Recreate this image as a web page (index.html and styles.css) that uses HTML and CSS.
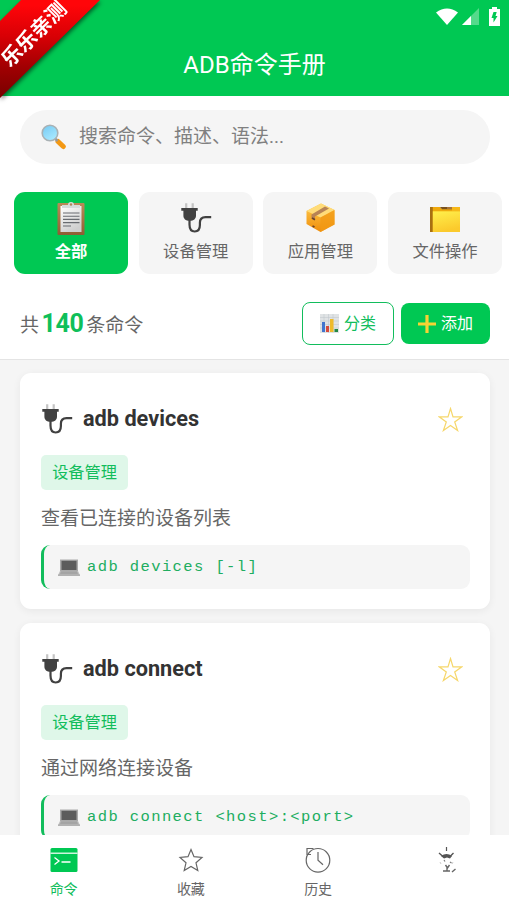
FILE: index.html
```html
<!DOCTYPE html>
<html lang="zh-CN">
<head>
<meta charset="utf-8">
<title>ADB命令手册</title>
<link rel="stylesheet" href="styles.css">
</head>
<body>
<svg class="defs" width="0" height="0" aria-hidden="true">
  <defs>
    <linearGradient id="paper" x2="0.5" y2="1"><stop stop-color="#fff"/><stop offset="1" stop-color="#cfcfcf"/></linearGradient>
    <linearGradient id="orange" x2="0" y2="1"><stop stop-color="#ffca4d"/><stop offset="1" stop-color="#ef8d0a"/></linearGradient>
    <linearGradient id="yellow" x2="0.3" y2="1"><stop stop-color="#fff04c"/><stop offset="1" stop-color="#fbca2c"/></linearGradient>
    <linearGradient id="lens" x2="0.6" y2="1"><stop stop-color="#73c9f3"/><stop offset="1" stop-color="#a9e9ff"/></linearGradient>
    <linearGradient id="brown" x2="0" y2="1"><stop stop-color="#ba8a58"/><stop offset="1" stop-color="#8f5d33"/></linearGradient>
  </defs>
  <symbol id="plug" viewBox="0 0 32 32">
    <path d="M6.2 1.2v5M12.7 1.2v5" stroke="#c4c4c4" stroke-width="2.2"/>
    <path d="M1.3 6h16.4v2.8H16v4.7c0 3.3-2.2 5.3-6.3 5.3S3.4 16.800 3.400 13.500V8.800H1.300z" fill="#414141"/>
    <path d="M9.500 18v4.500c0 4.400 1.900 7 5.200 7s5.200-2.500 5.200-6.500v-2.200c0-4 2-5.700 5.600-5.700h5.700" fill="none" stroke="#414141" stroke-width="2.200"/>
  </symbol>
  <symbol id="laptop" viewBox="0 0 22 17">
    <path d="M2 .5h18V12H2z" fill="#aaa"/><path d="M3.500 1.800h15V11h-15z" fill="#5c5c5c"/>
    <path d="M2 12h18l2 4.200H0z" fill="#bebebe"/><path d="M2.800 13h16.400M2.200 14.200h17.600" stroke="#8b8b8b" stroke-width=".7"/><path d="M0 16.200h22" stroke="#999"/>
  </symbol>
  <symbol id="star" viewBox="0 0 25 25">
    <path d="M12.500 1.500 15 9.800h8.800L16.700 15l2.900 8.500-7.100-5.100-7.100 5.100L8.300 15 1.200 9.800H10z" fill="none" stroke="#f6d76b" stroke-width="1.200"/>
  </symbol>
</svg>

<div class="app">
  <header class="header">
    <div class="status">
      <svg width="22" height="18" viewBox="0 0 22 18"><path d="M0 4.500Q11-3.500 22 4.500L11 17z" fill="#fff"/></svg>
      <svg width="17" height="17" viewBox="0 0 17 17"><path d="M0 17 17 0v17z" fill="#fff" opacity=".33"/><path d="M0 17 9 8v9z" fill="#fff"/></svg>
      <svg class="battery" width="11" height="19" viewBox="0 0 11 19"><path d="M3 0h5v2h3v17H0V2h3z" fill="#fff"/><path d="M4.500 5h3.200L6.500 9h2l-4 6.500V11h-2z" fill="#00c853"/></svg>
    </div>
    <h1 class="title">ADB命令手册</h1>
    <div class="ribbon"><div class="ribbon-band"></div><span class="ribbon-text">乐乐亲测</span></div>
  </header>

  <section class="top">
    <div class="search">
      <svg width="26" height="26" viewBox="0 0 26 26"><path d="m17 17.500 5.300 5" stroke="#f39813" stroke-width="5" stroke-linecap="round"/><path d="m13.500 14 3 3" stroke="#999" stroke-width="2.500"/><circle cx="9" cy="9" r="7.800" fill="url(#lens)" stroke="#a9b1b4" stroke-width="1.600"/></svg>
      <span>搜索命令、描述、语法...</span>
    </div>
    <nav class="tabs">
      <div class="tab active">
        <svg width="34" height="34" viewBox="0 0 34 34"><rect x="3.500" y="2" width="27" height="32" rx="1" fill="url(#brown)"/><path d="M6.500 5h21v26h-21z" fill="url(#paper)"/><path d="M9 12h16.500M9 15.200h16.500M9 18.400h16.500M9 21.600h16.500M9 25h8" stroke="#686b70" stroke-width="1.100"/><path d="M8 7V4h6q0-3 3-3t3 3h6v3z" fill="#d6dcdc"/><circle cx="17" cy="3.500" r="1.200" fill="#b38458"/></svg>
        <span>全部</span>
      </div>
      <div class="tab"><svg width="32" height="32"><use href="#plug"/></svg><span>设备管理</span></div>
      <div class="tab">
        <svg width="32" height="32" viewBox="0 0 32 32"><path d="M2.500 9 17 1.500 30.500 8v14.500L16.500 30 2.500 22z" fill="url(#orange)"/><path d="M2.500 9 17 1.500 30.500 8l-14 7.500z" fill="#ffdc79"/><path d="m16.500 15.500 14-7.500v14.500l-14 7.500z" fill="#f19a14" opacity=".75"/><path d="M7.500 12.500v4l3.500 1.500v-3.600L25 6.500l-4-2z" fill="#b78355"/><path d="m8 16 3 1.800M8.500 24l2 1" stroke="#6b4329" stroke-width="1.700"/></svg>
        <span>应用管理</span>
      </div>
      <div class="tab">
        <svg width="32" height="32" viewBox="0 0 32 32"><path d="M1 5h10l2 2h18v23H1z" fill="#efa90c"/><path d="M11 5h12v2.200H13z" fill="#79511d"/><path d="M18 5h5v2h-5z" fill="#a87438"/><path d="M23 5h8v4h-8z" fill="#f7b818"/><path d="M1 5h2.800v25H1z" fill="#a87012"/><path d="M3.800 9.300H31V30H3.800z" fill="url(#yellow)"/></svg>
        <span>文件操作</span>
      </div>
    </nav>
    <div class="stats">
      <div class="count">共<b>140</b>条命令</div>
      <div class="actions">
        <div class="btn outline">
          <svg width="19" height="19" viewBox="0 0 19 19"><path d="M0 0h19v19H0z" fill="#e0e3e5"/><path d="M0 3.500h19M0 7h19M0 10.500h19M0 14h19M4 0v19M8.500 0v19M13 0v19" stroke="#bfc5ca" stroke-width=".5"/><path d="M2 8h3v10H2z" fill="#4275ce"/><path d="M6 12h3v6H6z" fill="#d64a3c"/><path d="M10 5h3.500v13H10z" fill="#efbb2b"/><path d="M14.500 15H18v3h-3.500z" fill="#238844"/></svg>
          <span>分类</span>
        </div>
        <div class="btn solid">
          <svg width="18" height="18" viewBox="0 0 18 18"><path d="M9 0v18M0 9h18" stroke="#f7d334" stroke-width="3.200"/></svg>
          <span>添加</span>
        </div>
      </div>
    </div>
  </section>

  <main class="list">
    <article class="card">
      <div class="card-head"><svg width="32" height="32"><use href="#plug"/></svg><h2>adb devices</h2><svg width="25" height="25"><use href="#star"/></svg></div>
      <div class="tag">设备管理</div>
      <p class="desc">查看已连接的设备列表</p>
      <div class="code"><svg width="22" height="17"><use href="#laptop"/></svg><code>adb devices [-l]</code></div>
    </article>
    <article class="card">
      <div class="card-head"><svg width="32" height="32"><use href="#plug"/></svg><h2>adb connect</h2><svg width="25" height="25"><use href="#star"/></svg></div>
      <div class="tag">设备管理</div>
      <p class="desc">通过网络连接设备</p>
      <div class="code"><svg width="22" height="17"><use href="#laptop"/></svg><code>adb connect &lt;host&gt;:&lt;port&gt;</code></div>
    </article>
  </main>

  <footer class="nav">
    <div class="nav-item on">
      <svg width="28" height="28" viewBox="0 0 28 28"><rect x=".5" y="2" width="27" height="24" rx="1.500" fill="#00c853"/><path d="M.5 7.200h27" stroke="#fff" stroke-width="1.200"/><path d="m4.500 11.500 4.500 3.500-4.500 3.500M11.500 16h9" fill="none" stroke="#fff" stroke-width="1.300"/></svg>
      <span>命令</span>
    </div>
    <div class="nav-item">
      <svg width="28" height="28" viewBox="0 0 28 28"><path d="m14 3.500 3 7.200 8 .8-6 5.300 1.800 7.800L14 20.500l-6.800 4.100L9 16.800l-6-5.300 8-.8z" fill="none" stroke="#666" stroke-width="1.200"/></svg>
      <span>收藏</span>
    </div>
    <div class="nav-item">
      <svg width="28" height="28" viewBox="0 0 28 28"><circle cx="14" cy="14.300" r="11.800" fill="none" stroke="#666" stroke-width="1.200"/><path d="M14 6v8.300l5 4.500M3 9V2.500h6.500M3 8.500h4" fill="none" stroke="#666" stroke-width="1.200"/></svg>
      <span>历史</span>
    </div>
    <div class="nav-item">
      <svg class="bug" width="28" height="28" viewBox="0 0 28 28"><path d="M13.500 1v4" stroke="#555" stroke-width="1.200"/><path d="m6 7 4 3.500M20.500 7 17 10.500" stroke="#555" stroke-width="1.400"/><path d="M8 10q5.500-4 11 0l-2 2.500-3-1-3 1z" fill="#555"/><path d="m11 14 1 1.500m5 .5 1.500 1" fill="none" stroke="#777" stroke-width="1.200"/><path d="M7 16l1 2m12-2-1 2" stroke="#ccc"/><path d="M12.500 19l2 3 2-3M14 21v3.500M10 25h7M19 26l3.500-3" fill="none" stroke="#666" stroke-width="1.400"/></svg>
    </div>
  </footer>
</div>
</body>
</html>
```

FILE: styles.css
```css
* { box-sizing: border-box; }
body {
  margin: 0;
  background: #f5f5f5;
  color: #666;
  font-family: Roboto, "Noto Sans CJK SC", sans-serif;
  font-weight: 400;
}
svg { display: block; flex: none; }
.defs { position: absolute; }
.app { height: 906px; display: flex; flex-direction: column; overflow: hidden; }

.header { position: relative; flex: none; height: 96px; background: #00c853; color: #fff; }
.status { height: 32px; padding: 8px 9px 0 0; display: flex; justify-content: flex-end; gap: 4px; }
.status .battery { margin: -1px 0 0 6px; }
.title { margin: 0; height: 64px; line-height: 67px; text-align: center; font-size: 24px; font-weight: 400; }
.ribbon { position: absolute; left: 0; top: 0; width: 104px; height: 104px; filter: drop-shadow(1px 2px 2px rgba(0, 0, 0, .55)); }
.ribbon-band {
  height: 100%;
  background: linear-gradient(to top, #700 5%, #a00002 35%, #d80005 65%, #ff0509 95%);
  clip-path: polygon(21px 0, 100px 0, 0 98px, 0 21px);
}
.ribbon-text {
  position: absolute; left: -8px; top: 22px; width: 84px; line-height: 24px;
  text-align: center; white-space: nowrap; font-size: 20.500px; font-weight: 700;
  transform: rotate(-45deg);
}

.top { flex: none; height: 264px; background: #fff; border-bottom: 1px solid #e4e4e4; padding-top: 14px; }
.search {
  margin: 0 19px 0 20px; height: 54px; border-radius: 27px; background: #f5f5f5;
  display: flex; align-items: center; gap: 12px; padding-left: 21px; padding-bottom: 1px;
  font-size: 19px; color: #808080;
}
.search span { line-height: 28px; }
.tabs { display: grid; grid-template-columns: repeat(4, 114px); gap: 10.7px; margin: 28px 0 0 14px; }
.tab {
  height: 82px; border-radius: 11px; background: #f5f5f5; padding-top: 9px;
  display: flex; flex-direction: column; align-items: center; font-size: 16.300px;
}
.tab svg { height: 34px; }
.tab span { line-height: 30px; margin-top: 2px; }
.tab.active { background: #00c853; color: #fff; font-weight: 700; }
.stats { margin: 28px 19px 0 20px; height: 43px; display: flex; justify-content: space-between; align-items: center; }
.count { font-size: 19px; display: flex; align-items: center; }
.count b { font-size: 25px; color: #0fbf5a; margin: 0 2.500px; letter-spacing: -.3px; }
.actions { display: flex; align-items: center; gap: 7px; }
.btn { display: flex; align-items: center; justify-content: center; gap: 5px; border-radius: 8px; font-size: 16px; }
.btn span { line-height: 24px; }
.btn.outline { width: 92px; height: 43px; border: 1px solid #12bd5c; color: #12bd5c; }
.btn.solid { width: 89px; height: 41px; background: #00c853; color: #fff; }

.list { flex: 1; min-height: 0; overflow: hidden; padding: 13px 19px 0 20px; }
.card {
  height: 236px; margin-bottom: 14px; padding: 21px 20px 20px 21px; background: #fff;
  border-radius: 11px; box-shadow: 0 2px 9px rgba(0, 0, 0, .06);
}
.card-head { height: 50px; display: flex; align-items: center; }
.card-head h2 { margin: 0 auto 0 10px; font-size: 21.700px; line-height: 30px; font-weight: 700; color: #333; }
.card-head svg:last-child { margin-right: 7px; }
.tag {
  width: 87px; height: 35px; margin-top: 11px; line-height: 36px; text-align: center;
  border-radius: 5px; background: #dff7e9; color: #12bd5c; font-size: 16.200px;
}
.desc { margin: 14px 0 13px; height: 28px; line-height: 29px; font-size: 19px; }
.code {
  height: 44px; display: flex; align-items: center; gap: 7px; padding-left: 14px;
  background: #f5f5f5; border-left: 3px solid #12bd5c; border-radius: 9px; color: #20ad60;
}
.code code { font-family: "Liberation Mono", monospace; font-size: 15.500px; letter-spacing: 1.400px; white-space: nowrap; }

.nav { flex: none; height: 71px; background: #fff; display: grid; grid-template-columns: repeat(4, 1fr); padding-top: 11px; }
.nav-item { display: flex; flex-direction: column; align-items: center; font-size: 14px; }
.nav-item span { line-height: 20px; margin-top: 5px; }
.nav-item.on { color: #12bd5c; }
.nav .bug { margin-left: 3px; }
```
